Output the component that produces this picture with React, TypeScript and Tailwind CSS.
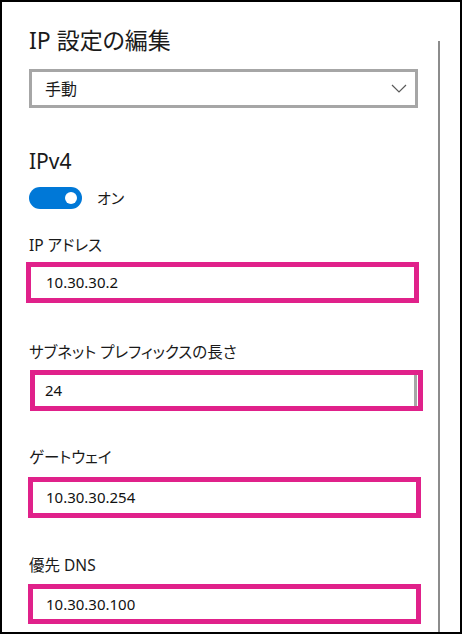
import React from 'react';

const font = "font-['Noto_Sans','Noto_Sans_CJK_JP',sans-serif] [font-feature-settings:'palt']";

type Field = {
  label: string;
  value: string;
  labelGap: string;
  boxGap: string;
  shift: string;
  pad: string;
  height: string;
  edge?: boolean;
};

const fields: Field[] = [
  { label: 'IP アドレス', value: '10.30.30.2', labelGap: 'mt-[25px]', boxGap: 'mt-[6px]', shift: 'ml-[-3px]', pad: 'pl-[15px]', height: 'h-[41px]' },
  { label: 'サブネット プレフィックスの長さ', value: '24', labelGap: 'mt-[38px]', boxGap: 'mt-[7px]', shift: 'ml-[1px]', pad: 'pl-[10px]', height: 'h-[41px]', edge: true },
  { label: 'ゲートウェイ', value: '10.30.30.254', labelGap: 'mt-[35px]', boxGap: 'mt-[9px]', shift: 'ml-[-1px]', pad: 'pl-[13px]', height: 'h-[41px]' },
  { label: '優先 DNS', value: '10.30.30.100', labelGap: 'mt-[36px]', boxGap: 'mt-[8px]', shift: 'ml-[-1px]', pad: 'pl-[13px]', height: 'h-[40px]' },
];

export default function App() {
  return (
    <div className={`w-[462px] h-[634px] border-2 border-black bg-white flex overflow-hidden ${font}`}>
      {/* Settings column */}
      <div className="w-[436px] pl-[27px] flex flex-col">
        <h1 className="mt-[22px] h-[32px] leading-[32px] text-[23px] text-[#1a1a1a] font-normal">IP 設定の編集</h1>

        <div className="mt-[13px] w-[389px] h-[39px] border-[3px] border-[#a6a6a6] flex items-center justify-between pl-[13px] pr-[8px]">
          <span className="text-[16px] text-[#1a1a1a]">手動</span>
          <svg width="16" height="9" viewBox="0 0 16 9" fill="none">
            <polyline points="1,1 8,8 15,1" stroke="#5a5a5a" strokeWidth="1.2" />
          </svg>
        </div>

        <h2 className="mt-[39px] h-[28px] leading-[28px] text-[21px] text-[#1a1a1a] font-normal">IPv4</h2>

        <div className="mt-[12px] h-[22px] flex items-center">
          <div className="w-[53px] h-[22px] rounded-full bg-[#0078d7] flex items-center justify-end pr-[5px]">
            <div className="w-[12px] h-[12px] rounded-full bg-white" />
          </div>
          <span className="ml-[15px] text-[15px] text-[#1a1a1a]">オン</span>
        </div>

        {fields.map((f) => (
          <div key={f.label} className="flex flex-col">
            <div className={`${f.labelGap} h-[22px] leading-[22px] text-[15.5px] text-[#1a1a1a]`}>{f.label}</div>
            <div
              className={`${f.boxGap} ${f.shift} ${f.height} w-[393px] border-[5px] border-[#e0218a] bg-white flex items-center ${f.pad}`}
            >
              <span className="flex-1 text-[15px] text-[#111]">{f.value}</span>
              {f.edge && <div className="w-[3px] h-full bg-[#a6a6a6] mr-[1px]" />}
            </div>
          </div>
        ))}
      </div>

      {/* Scroll track */}
      <div className="mt-[39px] w-[2px] bg-[#8c8c8c]" />
    </div>
  );
}
